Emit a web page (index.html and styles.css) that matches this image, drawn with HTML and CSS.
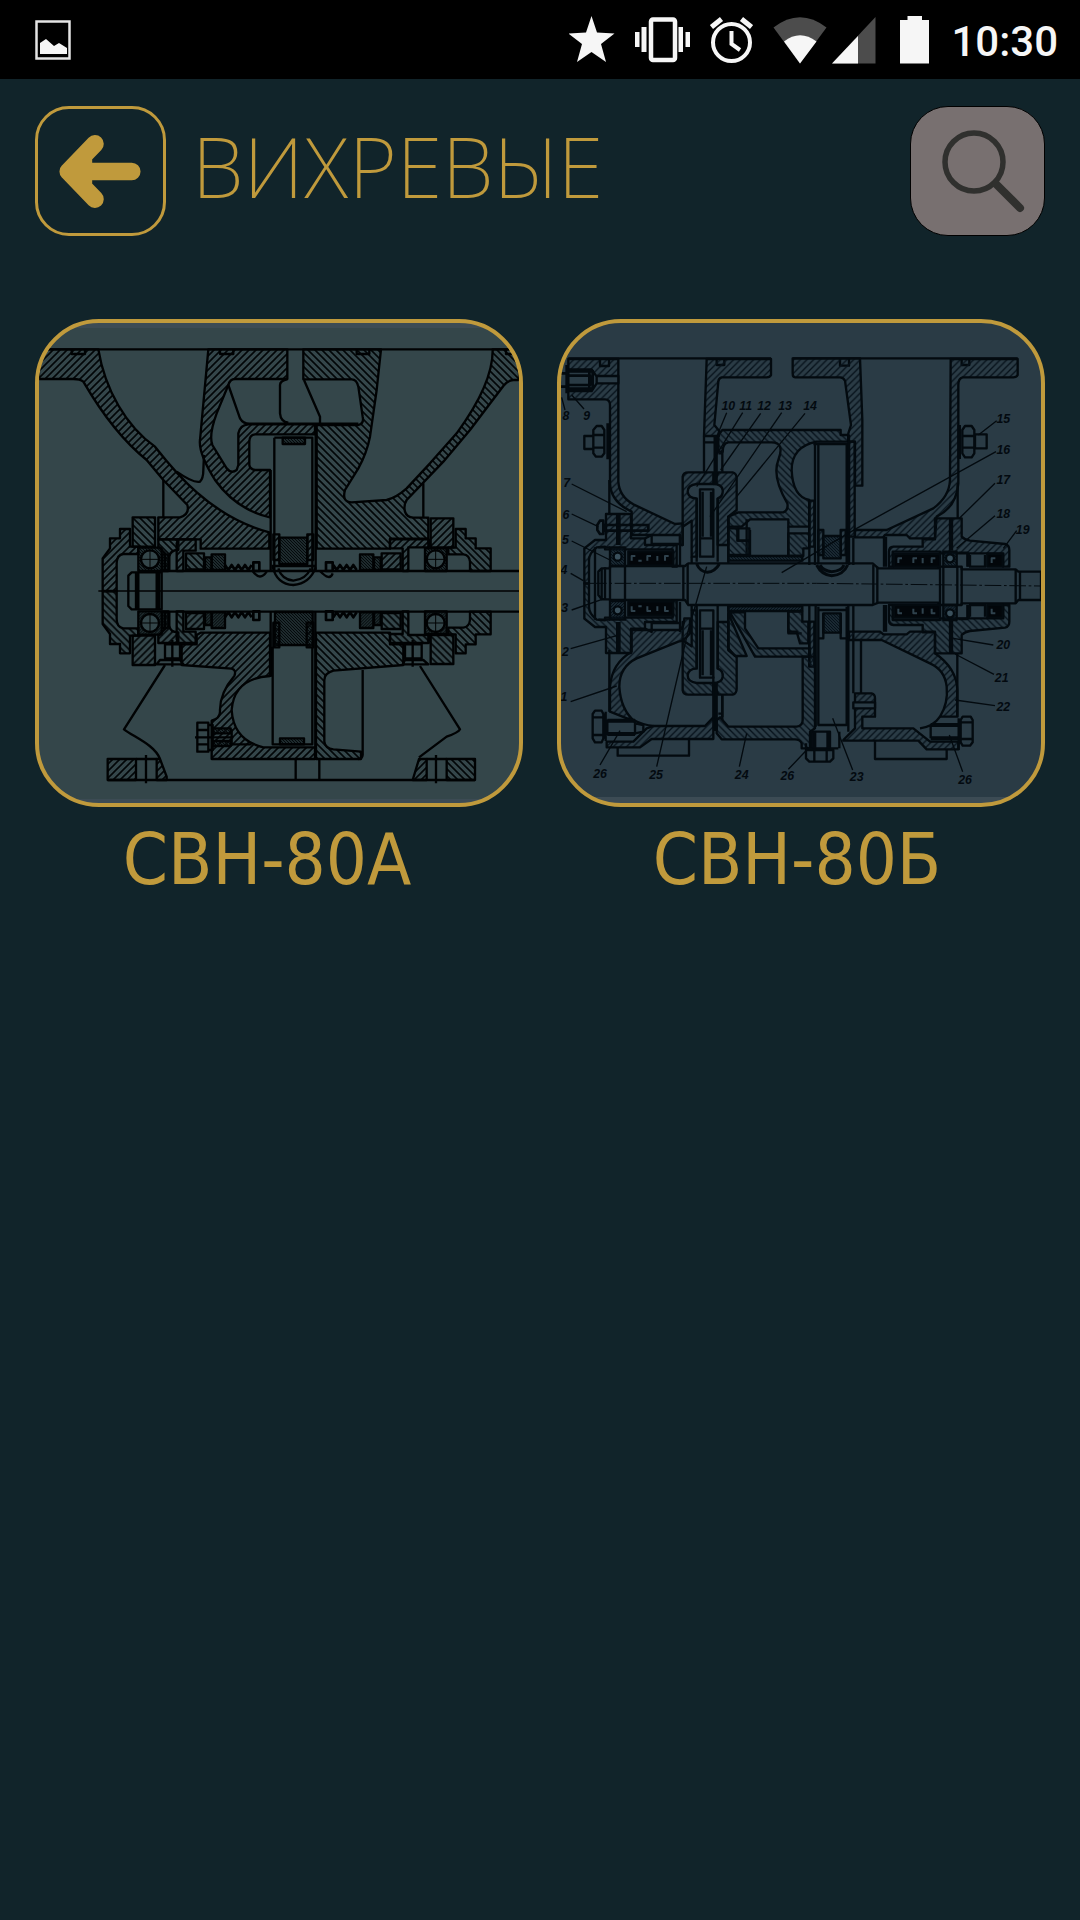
FILE: index.html
```html
<!DOCTYPE html>
<html lang="ru">
<head>
<meta charset="utf-8">
<meta name="viewport" content="width=device-width, initial-scale=1">
<title>Вихревые</title>
<link rel="stylesheet" href="styles.css">
</head>
<body>
<div class="status">
  <svg class="status-picture" width="36" height="40" viewBox="35 20 36 40" aria-hidden="true"><path d="M36.5 21.500H69.500V58.500H36.500Z" fill="none" stroke="#e4e4e4" stroke-width="2.500"/><path d="M40 54V43L46 39L54 46L59 43L67 48V54Z" fill="#f6f6f6"/></svg>
  <div class="status-icons">
    <svg width="46" height="48" viewBox="570 15 46 48" aria-hidden="true"><path fill="#f6f6f6" d="M592.500 15L598 31.500L615.500 32.500L602 43L607 61L592.500 51L578 61L583 43L569.500 32.500L587 31.500Z"/></svg>
    <svg width="55" height="48" viewBox="636 15 55 48" aria-hidden="true"><rect x="652" y="18.500" width="24" height="40.500" rx="2" fill="none" stroke="#f6f6f6" stroke-width="4.500"/><path fill="#f6f6f6" d="M636 31h4.500v15H636zM642.500 26h5v25h-5zM679.500 26h4.500v25h-4.500zM686.500 31h4.500v15h-4.500z"/></svg>
    <svg width="43" height="48" viewBox="711 15 43 48" aria-hidden="true"><g fill="none" stroke="#f6f6f6" stroke-width="4"><circle cx="732.500" cy="41.500" r="18.500"/><path d="M732.500 30V43L741 49"/><path stroke-width="5" d="M712.500 26L722.500 18M752.500 26L742.500 18"/></g></svg>
    <svg class="wifi" width="54" height="48" viewBox="774 15 54 48" aria-hidden="true"><path fill="#4c4c4c" d="M774.500 26.500Q801 6 827.500 26.500L801 62.500Z"/><path fill="#f6f6f6" d="M785 40.500Q801 28 817.500 40.500L801 62.500Z"/></svg>
    <svg width="44" height="48" viewBox="833 15 44 48" aria-hidden="true"><path fill="#4c4c4c" d="M876.500 16V62.500H833Z"/><path fill="#f6f6f6" d="M859 35V62.500H833Z"/></svg>
    <svg class="battery" width="29" height="48" viewBox="901 15 29 48" aria-hidden="true"><path fill="#f6f6f6" d="M908.500 15H923V19H930V62.500H901V19H908.500Z"/></svg>
    <time class="clock">10:30</time>
  </div>
</div>

<header class="header">
  <button class="back" type="button" aria-label="Назад">
    <svg viewBox="36 106 130 130" aria-hidden="true"><path d="M95.500 143.500L69 171L95.500 198.500M69 171H132M84 156V186" fill="none" stroke="#c09a3c" stroke-width="17.500" stroke-linecap="round" stroke-linejoin="round"/></svg>
  </button>
  <h1 class="title">ВИХРЕВЫЕ</h1>
  <button class="search" type="button" aria-label="Поиск">
    <svg viewBox="910 106 135 130" aria-hidden="true"><g fill="none" stroke="#30302e"><circle cx="974" cy="162" r="29" stroke-width="5.500"/><path d="M996 184L1020 208" stroke-width="8" stroke-linecap="round"/></g></svg>
  </button>
</header>

<main class="gallery">
  <a class="card" href="#svn-80a">
    <span class="frame frame-a">
      <svg viewBox="27 39 1440 1440" aria-hidden="true">
        <defs>
          <pattern id="up" width="21" height="21" patternUnits="userSpaceOnUse"><path d="M-5 5L5 -5M-5 26L26 -5M16 26L26 16" stroke="#020608" stroke-width="5"/></pattern>
          <pattern id="down" width="21" height="21" patternUnits="userSpaceOnUse"><path d="M16 -5L26 5M-5 -5L26 26M-5 16L5 26" stroke="#020608" stroke-width="5"/></pattern>
          <pattern id="dense" width="9" height="9" patternUnits="userSpaceOnUse"><path d="M-2 -2L11 11M7 -2L11 2M-2 7L2 11" stroke="#04090b" stroke-width="4"/></pattern>
        </defs>
        <g class="ink">
          <path d="M27 118H1467M400 510V622M1180 520V622"/>
          <path fill="url(#up)" d="M27 118H205C225 240 290 350 375 410C430 480 540 620 718 667V716H512V688H385V622H450Q480 612 472 585L400 510L350 450Q250 370 160 215Q150 207 130 207H27Z"/>
          <path fill="url(#up)" d="M535 118H772V207H615Q600 207 595 225L560 310Q536 375 547 405L590 475Q603 492 620 480L625 465V370Q630 345 655 343H855V373H675Q658 375 658 395V465Q660 480 680 480H720V622Q620 600 555 510Q505 430 510 390Z"/>
          <path fill="url(#down)" d="M820 118H1053L1040 240L1020 380Q1010 430 985 475L945 540Q935 577 965 577L1070 570Q1100 562 1130 535L1200 460L1280 370Q1390 220 1388 118H1467V210H1450Q1435 210 1420 228L1320 360L1240 455L1130 570Q1120 585 1125 605Q1130 622 1150 623H1195V686H1080V716H860V345H985Q1003 340 998 320L985 230Q980 208 965 208H820Z"/>
          <path d="M595 225L630 325Q640 342 660 341H985M822 210L870 320V341M772 207Q750 213 750 225V310Q752 335 775 338M440 485Q490 520 510 515Q520 505 520 480L522 435M125 118V132H165V118M570 118V132H610V118M980 118V132H1018V118M1428 118V132H1467"/>
          <path d="M733 383H847V780M733 383V780M722 480V780M857 345V780"/>
          <path fill="url(#dense)" d="M758 383V402H825V383Z"/>
          <path fill="url(#dense)" d="M748 683H832V762H748Z"/>
          <path fill="url(#up)" d="M730 673H748V750H730ZM832 673H850V750H832Z"/>
          <path d="M725 768H857M728 770Q740 822 790 825Q840 820 857 772M745 775Q755 808 790 812Q828 808 842 775"/>
          <path fill="url(#dense)" d="M735 906H848V1005H735ZM750 1285H822V1303H750Z"/>
          <path fill="url(#up)" d="M730 938H748V1012H730ZM830 938H850V1012H830Z"/>
          <path d="M728 1010V1303H847V1010M722 906V1100M856 906V1347"/>
          <path d="M395 783H1467M395 905H1467"/>
          <path d="M205 843H1467" stroke-width="4"/>
          <path d="M325 787H305L295 797V888L305 898H325ZM318 790V897M325 787H395V898H325M380 787V898M387 787V898"/>
          <path fill="url(#up)" d="M512 968H720V1098Q612 1105 605 1200Q610 1290 700 1312H855V1347H545V1232Q570 1225 570 1205Q568 1150 613 1098Q620 1080 605 1076L455 1065V1003H500V975Z"/>
          <path fill="url(#down)" d="M858 968H1080V1003H1120V1065L910 1082Q883 1090 883 1110V1295Q885 1315 910 1318L993 1325V1347H858Z"/>
          <path d="M998 1080V1335Q997 1347 985 1347"/>
          <g id="half">
            <path fill="url(#up)" d="M300 657H270V685H240V715L218 745V843H260V760Q260 735 280 732H325V710H300Z"/>
            <path fill="url(#down)" d="M308 622H375V710H308Z"/>
            <path fill="url(#dense)" d="M325 713H395V783H325ZM397 733H415V783H397ZM525 742H545V780H525Z"/>
            <circle cx="360" cy="748" r="27" fill="#34464a"/>
            <path d="M333 748H387M360 721V775" stroke-width="3"/>
            <path fill="url(#down)" d="M385 688H445V720Q420 720 418 740V780H405V730L385 710Z"/>
            <path fill="url(#up)" d="M445 688H497V722H460V783H440V700Z"/>
            <path fill="url(#down)" d="M468 730H522V778H468Z"/>
            <path fill="url(#dense)" d="M545 733H585V780H545Z"/>
            <path d="M585 765L595 780L605 765L615 780L625 765L635 780L645 765L655 780L665 765M670 757H688V783H670Z" stroke-width="8"/>
          </g>
          <use href="#half" transform="translate(0 1687) scale(1 -1)"/>
          <path fill="url(#down)" d="M1277 657H1307V685H1337V715H1382V783H1320V755Q1318 735 1300 733H1255V713H1277Z"/>
          <path fill="url(#down)" d="M1277 1030H1307V1003H1337V973H1382V905H1320V930Q1318 950 1300 953H1255V973H1277Z"/>
          <g id="seal">
            <path fill="url(#up)" d="M1202 625H1270V712H1202ZM1080 688H1195V712H1135V783H1118V715H1080Z"/>
            <path fill="url(#dense)" d="M1185 715H1250V783H1185ZM990 733H1030V780H990ZM1032 742H1052V780H1032Z"/>
            <circle cx="1217" cy="748" r="27" fill="#34464a"/>
            <path d="M1190 748H1244M1217 721V775" stroke-width="3"/>
            <path fill="url(#up)" d="M1055 730H1112V778H1055Z"/>
            <path d="M910 765L920 780L930 765L940 780L950 765L960 780L970 765L980 780M888 757H908V783H888Z" stroke-width="8"/>
          </g>
          <use href="#seal" transform="translate(0 1687) scale(1 -1)"/>
          <path d="M668 783Q690 815 710 785M870 783Q900 815 908 790"/>
          <path d="M405 1003H450V1045H405ZM380 1063H460L450 1050H390ZM1125 1003H1175V1045H1125ZM1118 1063H1195L1180 1050H1125ZM427 990V1070M1148 990V1070"/>
          <path d="M405 1065L282 1258C310 1280 375 1305 390 1347M1170 1068L1290 1258Q1285 1268 1250 1280L1167 1342"/>
          <path d="M233 1410H1335M797 1347V1410M868 1347V1410M318 1347H380M1190 1347H1250M348 1335V1420M1218 1335V1420"/>
          <path fill="url(#up)" d="M233 1347H318V1410H233ZM380 1347H390L410 1400V1410H380ZM1167 1347H1190V1410H1148Z"/>
          <path fill="url(#down)" d="M1250 1347H1335V1410H1250Z"/>
          <path d="M502 1238H535V1325H502ZM502 1260H535M502 1303H535M535 1245H548V1320H535ZM495 1282H610"/>
          <path fill="url(#dense)" d="M550 1255H602V1270H550ZM550 1293H602V1308H550Z"/>
          <path d="M605 1258V1303H665"/>
        </g>
      </svg>
    </span>
    <span class="label label-a">СВН-80А</span>
  </a>

  <a class="card" href="#svn-80b">
    <span class="frame frame-b">
      <svg viewBox="33 39 1440 1440" aria-hidden="true">
        <defs>
          <pattern id="up2" width="20" height="20" patternUnits="userSpaceOnUse"><path d="M-5 5L5 -5M-5 25L25 -5M15 25L25 15" stroke="#06111a" stroke-width="4"/></pattern>
          <pattern id="down2" width="20" height="20" patternUnits="userSpaceOnUse"><path d="M15 -5L25 5M-5 -5L25 25M-5 15L5 25" stroke="#06111a" stroke-width="4"/></pattern>
          <pattern id="dense2" width="9" height="9" patternUnits="userSpaceOnUse"><path d="M-2 -2L11 11M7 -2L11 2M-2 7L2 11" stroke="#06111a" stroke-width="4"/></pattern>
        </defs>
        <g class="ink ink-b">
          <path d="M55 145H663M728 145H1403"/>
          <path fill="url(#up2)" d="M55 147H205V515Q208 560 250 583L375 642L398 640V705H390V675H245V605Q182 575 180 520V285Q180 268 165 268H55Z"/>
          <path fill="#2a3b45" d="M55 178H125L140 200V220L125 243H55ZM140 198H205V220H140Z"/>
          <path d="M33 190H50V230H33M50 165V250M55 197H120V225H55M118 178V243M128 180V240M55 184H125M55 236H125" stroke-width="8"/>
          <path d="M150 147V168H177V147M500 147V165H523V147M870 147V167H897V147M1235 147V165H1258V147"/>
          <path fill="url(#up2)" d="M470 147H663V195Q660 202 650 202H515Q505 205 505 215L493 345L507 362V378H462Z"/>
          <path d="M462 378V485M462 397H492M178 510V612"/>
          <path fill="url(#down2)" d="M517 360H872V375H895V395H800Q725 410 725 480Q728 560 778 570V650H715V628H600L575 650H535V620L565 607H700Q716 600 712 580Q665 500 685 450Q705 397 665 397H535Q518 400 518 425H505V375Z"/>
          <g id="stator">
            <path fill="url(#up2)" d="M398 705V500Q400 487 415 487H490V522H440Q413 525 413 545Q415 565 440 565V740H425V632L398 650Z"/>
            <path fill="url(#up2)" d="M505 487H548Q560 490 560 505V600L535 620V705H503V565Q520 560 518 540Q515 522 490 522Z"/>
            <path d="M497 378V522" stroke-width="13"/><path d="M517 420V485M505 430H517"/>
            <path d="M440 565V755M503 565V755M450 538H490V740H450ZM458 545V680M483 545V680M450 685H490M535 620V760M425 740V760"/>
            <path fill="url(#dense2)" d="M535 738H757V752H535Z"/>
          </g>
          <use href="#stator" transform="translate(0 1641) scale(1 -1)"/>
          <path d="M590 628V738M715 650V738M600 660V735M715 905V970H755M565 655H598V692H565Z"/>
          <path fill="url(#down2)" d="M535 655H562V692H598V735H535ZM715 670H778V715H760V738H715ZM715 905H757V935H775V1000H750L740 965H715Z"/>
          <path fill="url(#down2)" d="M540 907H585V955L625 1015H780V1040H615ZM535 910L590 1038H555L535 1015Z"/>
          <path fill="#2a3b45" d="M145 785L155 775H180V768H405L415 760H968L985 775H1165V770H1235V778H1397L1405 785H1473V870H1405L1397 880H1235V885H1165V878H985L968 885H415L405 870H180V868H155L145 855Z"/>
          <path d="M155 775V868M165 772V870M180 768V872M225 768V872M400 768V872M413 760V883M970 765V885M982 770V880M1170 770V885M1180 770V885M1222 770V885M1235 770V885M1397 778V880M1410 785V870"/>
          <path d="M120 820H800L1473 828" stroke-width="3" stroke-dasharray="50 8 8 8"/>
          <path d="M440 762Q450 785 472 787Q495 785 508 762M800 765Q815 795 845 797Q880 795 893 765M810 765Q820 783 845 785Q875 783 882 765" stroke-width="9"/>
          <g id="bearing">
            <path fill="url(#up2)" d="M103 820V715L135 690H168V612H243V685H285V705H380V770H368V718H165V710L140 712Q117 730 117 750V820Z"/>
            <path d="M205 615V705" stroke-width="14"/>
            <path fill="url(#dense2)" d="M180 712H225V768H180Z"/><circle cx="203" cy="740" r="12" fill="#3a505c"/>
            <path fill="#02060a" d="M235 724H370V766H235Z"/>
            <path d="M245 752V738H256M292 752V738H303M345 752V738H356M322 752V738M265 752H275" stroke="#2f424d" stroke-width="6"/>
            <path d="M285 685L305 675V702H390V675M390 680V765M135 712V820M145 712H180"/>
          </g>
          <use href="#bearing" transform="translate(0 1641) scale(1 -1)"/>
          <path d="M142 645L150 632H160V672H150L142 660ZM165 645H295V662H165Z" stroke-width="8"/>
          <path fill="url(#up2)" d="M728 145H930L937 330V527H915V395H895V370L903 345Q886 220 885 212Q880 202 870 202H735Q728 202 728 190Z"/>
          <path fill="url(#up2)" d="M1202 147H1403V195Q1400 202 1390 202H1238Q1225 205 1225 225V520Q1220 590 1160 620L1155 685H1080L1070 675H1005L1000 682H915V660H1010L1150 595Q1198 560 1200 510Z"/>
          <path d="M1223 520V625M1002 680V770M1008 680V770M910 683V765"/>
          <path d="M795 395V765M805 402H890V760M805 402V760M897 375V765M778 570V765M790 402H900"/>
          <path fill="url(#up2)" d="M897 395H914V680H897ZM778 572H793V710H778ZM805 660H820V735H805ZM872 660H887V735H872ZM778 935H793V1070H778Z"/>
          <path fill="url(#dense2)" d="M820 678H872V745H820ZM820 910H872V968H820Z"/>
          <path d="M797 885V1250M805 890V1245H890V890M895 885V1265M778 885V1070M805 985H820V910M887 985H872V910M910 885V1150M933 990V1150M1002 885V965M1008 885V965M805 900H890"/>
          <g id="bearing-right">
            <path fill="url(#up2)" d="M1017 770V725Q1017 710 1030 710H1118V688H1155V625H1235V680Q1245 690 1260 692L1365 702Q1378 705 1378 720V770H1360V730H1170V725H1028V770Z"/>
            <path d="M1203 625V722" stroke-width="13"/>
            <path fill="url(#dense2)" d="M1180 725H1220V770H1180Z"/><circle cx="1200" cy="745" r="12" fill="#3a505c"/>
            <path fill="#02060a" d="M1032 732H1170V770H1032ZM1312 732H1358V770H1312Z"/>
            <path d="M1045 759V745H1056M1090 759V745H1101M1145 759V745H1156M1118 760V744M1325 759V745H1336" stroke="#2f424d" stroke-width="6"/>
            <path d="M1225 728H1252V770M1260 735V770H1305V735"/><path d="M1256 730V770" stroke-width="8"/>
          </g>
          <use href="#bearing-right" transform="translate(0 1655) scale(1 -1)"/>
          <g fill="#2a3b45"><path d="M103 378H130V417H103ZM140 348H155L163 360V430L155 440H138L130 430V360ZM130 375H163M130 413H163"/><path d="M1275 373H1310V415H1275ZM1245 348H1265L1273 360V430L1265 442H1245L1237 430V360ZM1237 378H1273M1237 413H1273"/></g>
          <path d="M174 340V448M1228 345V447" stroke-width="10"/>
          <path fill="url(#down2)" d="M510 1222L535 1250H740Q758 1248 758 1230V1040H795V1255L780 1265V1315H755V1300Q750 1288 735 1288H515L500 1270V1230Z"/>
          <path fill="url(#up2)" d="M245 960H390Q403 950 403 925H420V970Q400 995 385 995L260 1045Q208 1070 208 1130Q212 1200 255 1235L180 1205V1130Q185 1060 245 1025Z"/>
          <path d="M178 1020V1205M250 1230Q280 1245 310 1248"/>
          <path fill="url(#up2)" d="M310 1248H465L490 1222V1287H305L270 1312H170V1295H250L290 1255Z"/>
          <path d="M203 1312V1337H417V1287M490 1100V1225M517 1155V1230M135 1202H155L160 1212V1285L155 1297H135L128 1285V1212ZM128 1222H160M128 1275H160M167 1205V1293M172 1232H255V1272H172ZM255 1240L280 1245V1265L255 1270"/>
          <path d="M172 1232H255M172 1272H255M1142 1245H1225M1142 1285H1225" stroke-width="12"/>
          <path fill="url(#up2)" d="M897 965H990L1000 973H1070L1080 965H1155V1030Q1220 1075 1222 1140V1220H1170Q1195 1180 1190 1130Q1185 1080 1140 1060L995 990H897Z"/>
          <path fill="url(#up2)" d="M880 1290L915 1255V1150H965Q975 1152 975 1165V1220H937V1255H1090L1140 1295H1225V1318H1130L1105 1292H880Z"/>
          <path fill="#2a3b45" d="M910 1177H975V1195H910ZM785 1265H840V1318H785ZM768 1320H850V1345L840 1355H778L768 1345Z"/>
          <path d="M1222 1030V1220M1170 1220Q1150 1250 1110 1255M1142 1245V1285M975 1292V1347H1190V1318M1238 1220H1262L1268 1230V1297L1260 1307H1238L1232 1297V1230ZM1232 1237H1268M1232 1287H1268M1226 1225V1320M793 1320V1355M830 1320V1355M865 1315H768V1300M868 1315V1265"/>
          <path d="M793 1265V1315M835 1265V1315" stroke-width="12"/>
          <path stroke-width="4" d="M35 262L45 300M65 255L102 297M530 308L500 380M578 308L440 530M632 310L512 480M695 308L480 620M765 310L560 560M1285 375L1340 332M1338 425L920 655L695 788M1335 520L1228 625M1335 617L1220 715M1400 662L1360 715M65 522L230 605M65 612L145 650M65 693L180 750M62 790L100 812M65 900L165 865M62 1016L200 977M62 1175L200 1128M150 1365L210 1262M320 1370L415 960L470 770M568 1370L590 1270M715 1378L775 1315M908 1380L848 1225M1238 1385L1198 1275M1335 1187L1215 1170M1332 1093L1215 1032M1330 1005L1210 985"/>
        </g>
        <g class="callouts">
          <text x="48" y="330">8</text><text x="110" y="330">9</text><text x="535" y="300">10</text><text x="587" y="300">11</text><text x="642" y="300">12</text><text x="705" y="300">13</text><text x="780" y="300">14</text><text x="1360" y="340">15</text><text x="1360" y="433">16</text><text x="1360" y="522">17</text><text x="1360" y="623">18</text><text x="1418" y="673">19</text><text x="50" y="532">7</text><text x="48" y="627">6</text><text x="46" y="703">5</text><text x="42" y="792">4</text><text x="44" y="905">3</text><text x="46" y="1038">2</text><text x="42" y="1172">1</text><text x="150" y="1405">26</text><text x="318" y="1407">25</text><text x="575" y="1408">24</text><text x="712" y="1410">26</text><text x="920" y="1413">23</text><text x="1245" y="1422">26</text><text x="1360" y="1203">22</text><text x="1355" y="1117">21</text><text x="1360" y="1017">20</text>
        </g>
      </svg>
    </span>
    <span class="label label-b">СВН-80Б</span>
  </a>
</main>
</body>
</html>
```

FILE: styles.css
```css
* {
  box-sizing: border-box;
}

body {
  margin: 0;
  min-height: 100vh;
  background: #11242a;
  color: #c09a3c;
  font-family: "Noto Sans", sans-serif;
}

svg {
  display: block;
}

/* Status bar */
.status {
  display: flex;
  justify-content: space-between;
  align-items: center;
  height: 79px;
  padding: 0 22px 0 35px;
  background: #000;
}

.status-icons {
  display: flex;
  align-items: center;
  gap: 20px;
}

.wifi {
  margin-right: -15px;
}

.battery {
  margin: 0 2px 0 4px;
}

.clock {
  padding-top: 4px;
  color: #f6f6f6;
  font: 500 42px/48px Roboto, sans-serif;
}

/* Title row */
.header {
  display: flex;
  align-items: center;
  padding: 27px 35px 0;
}

.back,
.search {
  flex: none;
  height: 130px;
  padding: 0;
  cursor: pointer;
}

.back {
  width: 131px;
  border: 3px solid #c09a3c;
  border-radius: 34px;
  background: none;
}

.back svg {
  margin: -3px;
}

.search {
  width: 135px;
  border: 1px solid #000;
  border-radius: 38px;
  background: #787070;
}

.search svg {
  margin: -1px;
}

.title {
  flex: 1;
  margin: 0 0 0 26px;
  padding-bottom: 10px;
  font-size: 83px;
  font-weight: 200;
  line-height: 120px;
}

/* Pump cards */
.gallery {
  display: grid;
  grid-template-columns: 1fr 1fr;
  gap: 34px;
  padding: 83px 35px 35px;
}

.card {
  display: flex;
  flex-direction: column;
  color: inherit;
  text-decoration: none;
}

.frame {
  aspect-ratio: 1;
  overflow: hidden;
  border: 4px solid #c09a3c;
  border-radius: 64px;
}

.frame-a {
  background: linear-gradient(#3c4b54 5px, #34464a 5px, #34464a calc(100% - 4px), #3c4b54 calc(100% - 4px));
}

.frame-b {
  background: linear-gradient(#2a3b45 calc(100% - 6px), #3c4b54 calc(100% - 6px));
}

.label {
  font: 72px/104px "DejaVu Sans Condensed", "DejaVu Sans", sans-serif;
  text-align: center;
}

.label-a {
  padding-right: 24px;
}

.label-b {
  padding-right: 8px;
}

/* Drawings */
.ink {
  fill: none;
  stroke: #000203;
  stroke-width: 7px;
  stroke-linejoin: round;
}

.ink-b {
  stroke: #030a0f;
}

.callouts {
  fill: #030a10;
  font: italic bold 37px "Liberation Sans", sans-serif;
  text-anchor: middle;
}
```
